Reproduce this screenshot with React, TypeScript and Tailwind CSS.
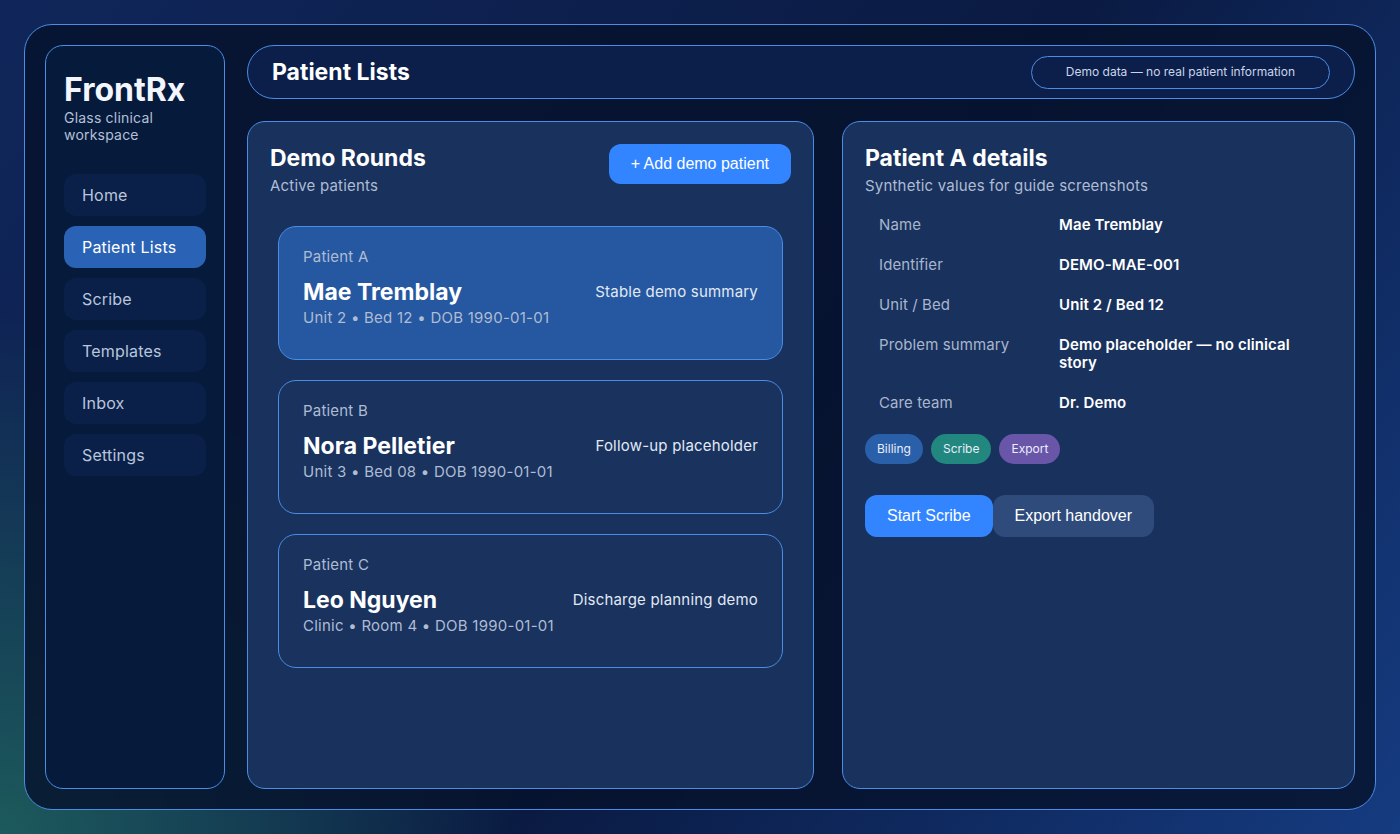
import React from 'react'

const navItems = ['Home', 'Patient Lists', 'Scribe', 'Templates', 'Inbox', 'Settings']

const patients = [
  {
    tag: 'Patient A',
    name: 'Mae Tremblay',
    meta: 'Unit 2 • Bed 12 • DOB 1990-01-01',
    summary: 'Stable demo summary',
    active: true,
  },
  {
    tag: 'Patient B',
    name: 'Nora Pelletier',
    meta: 'Unit 3 • Bed 08 • DOB 1990-01-01',
    summary: 'Follow-up placeholder',
    active: false,
  },
  {
    tag: 'Patient C',
    name: 'Leo Nguyen',
    meta: 'Clinic • Room 4 • DOB 1990-01-01',
    summary: 'Discharge planning demo',
    active: false,
  },
]

const details = [
  { label: 'Name', value: 'Mae Tremblay' },
  { label: 'Identifier', value: 'DEMO-MAE-001' },
  { label: 'Unit / Bed', value: 'Unit 2 / Bed 12' },
  { label: 'Problem summary', value: 'Demo placeholder — no clinical story' },
  { label: 'Care team', value: 'Dr. Demo' },
]

const Sidebar = () => {
  return (
    <aside className="flex flex-col rounded-[18px] border border-[#4a8de6] bg-[#061a3b] px-[18px] pt-[25px]">
      <h1 className="text-[32px] leading-[38px] font-bold text-[#f3f6ff]">FrontRx</h1>
      <p className="text-[14px] leading-[17px] tracking-[0.2px] text-[#b3c0d8]">
        Glass clinical
        <br />
        workspace
      </p>
      <nav className="mt-[31px] flex flex-col gap-[10px]">
        {navItems.map((item) => (
          <div
            key={item}
            className={
              item === 'Patient Lists'
                ? 'flex h-[42px] items-center rounded-xl bg-[#2a63b6] px-[18px] text-[16px] tracking-[0.2px] text-white'
                : 'flex h-[42px] items-center rounded-xl bg-[#0b2049] px-[18px] text-[16px] tracking-[0.2px] text-[#b9c6dc]'
            }
          >
            {item}
          </div>
        ))}
      </nav>
    </aside>
  )
}

const PatientCard = ({
  tag,
  name,
  meta,
  summary,
  active,
}: {
  tag: string
  name: string
  meta: string
  summary: string
  active: boolean
}) => {
  return (
    <div
      className={
        active
          ? 'h-[134px] rounded-[18px] border border-[#4a8de6] bg-[#2558a0] px-6 pt-5'
          : 'h-[134px] rounded-[18px] border border-[#4a8de6] bg-[#19325e] px-6 pt-5'
      }
    >
      <div className="text-[15px] leading-5 tracking-[0.2px] text-[#aebcd4]">{tag}</div>
      <div className="mt-[11px] flex items-center justify-between">
        <div className="text-[23px] leading-7 font-bold text-white">{name}</div>
        <div className="text-[15px] leading-5 tracking-[0.2px] text-[#e2e9f5]">{summary}</div>
      </div>
      <div className="mt-[2px] text-[15px] leading-5 tracking-[0.25px] text-[#aebcd4]">{meta}</div>
    </div>
  )
}

const RoundsPanel = () => {
  return (
    <section className="rounded-[18px] border border-[#4a8de6] bg-[#19315d] p-[22px]">
      <div className="flex items-start justify-between">
        <div>
          <h2 className="text-[23px] leading-7 font-bold text-white">Demo Rounds</h2>
          <p className="mt-1 text-[15px] leading-5 tracking-[0.2px] text-[#aebcd4]">Active patients</p>
        </div>
        <button className="h-10 rounded-xl bg-[#3385ff] px-[22px] font-['Liberation_Sans',Arial,sans-serif] text-[16px] text-white">
          + Add demo patient
        </button>
      </div>
      <div className="mt-[22px] flex flex-col gap-5 p-2">
        {patients.map((p) => (
          <PatientCard key={p.tag} {...p} />
        ))}
      </div>
    </section>
  )
}

const DetailsPanel = () => {
  return (
    <section className="rounded-[18px] border border-[#4a8de6] bg-[#19315d] p-[22px]">
      <h2 className="text-[23px] leading-7 font-bold text-white">Patient A details</h2>
      <p className="mt-1 text-[15px] leading-5 tracking-[0.2px] text-[#aebcd4]">Synthetic values for guide screenshots</p>
      <dl className="mt-5 grid grid-cols-[180px_1fr] gap-y-[22px] px-[14px] text-[15px] leading-[18px] tracking-[0.1px]">
        {details.map((d) => (
          <React.Fragment key={d.label}>
            <dt className="text-[#a8b6ce]">{d.label}</dt>
            <dd className="font-semibold text-white">{d.value}</dd>
          </React.Fragment>
        ))}
      </dl>
      <div className="mt-[22px] flex gap-2">
        <span className="flex h-[30px] items-center rounded-full bg-[#2a60a9] px-3 text-[12px] text-[#e8eefb]">Billing</span>
        <span className="flex h-[30px] items-center rounded-full bg-[#22877f] px-3 text-[12px] text-[#e8eefb]">Scribe</span>
        <span className="flex h-[30px] items-center rounded-full bg-[#6a56a9] px-3 text-[12px] text-[#e8eefb]">Export</span>
      </div>
      <div className="mt-[31px] flex font-['Liberation_Sans',Arial,sans-serif] text-[16px] text-white">
        <button className="h-[42px] rounded-xl bg-[#3385ff] px-[22px]">Start Scribe</button>
        <button className="h-[42px] rounded-xl bg-[#2f4b7c] px-[22px]">Export handover</button>
      </div>
    </section>
  )
}

const App = () => {
  return (
    <div className="h-screen bg-[radial-gradient(circle_at_0%_100%,#1c5a5c_0%,rgba(20,70,80,0)_32%),linear-gradient(125deg,#10265a_0%,#0a1a42_55%,#153b80_100%)] p-6 font-['Inter','Noto_Sans',sans-serif]">
      <div className="grid h-full grid-cols-[180px_1fr] gap-[22px] rounded-[28px] border border-[#4a8de6] bg-[rgba(6,18,44,0.82)] p-5">
        <Sidebar />
        <div className="flex min-h-0 flex-col gap-[22px]">
          <header className="flex h-[54px] items-center justify-between rounded-[27px] border border-[#4a8de6] bg-[#0c1f4a] px-6">
            <h1 className="text-[23px] font-bold text-white">Patient Lists</h1>
            <span className="flex h-[33px] items-center rounded-full border border-[#4a8de6] px-[34px] text-[12px] text-[#c9d5ea]">
              Demo data — no real patient information
            </span>
          </header>
          <div className="grid flex-1 grid-cols-[567fr_513fr] gap-7">
            <RoundsPanel />
            <DetailsPanel />
          </div>
        </div>
      </div>
    </div>
  )
}

export default App
